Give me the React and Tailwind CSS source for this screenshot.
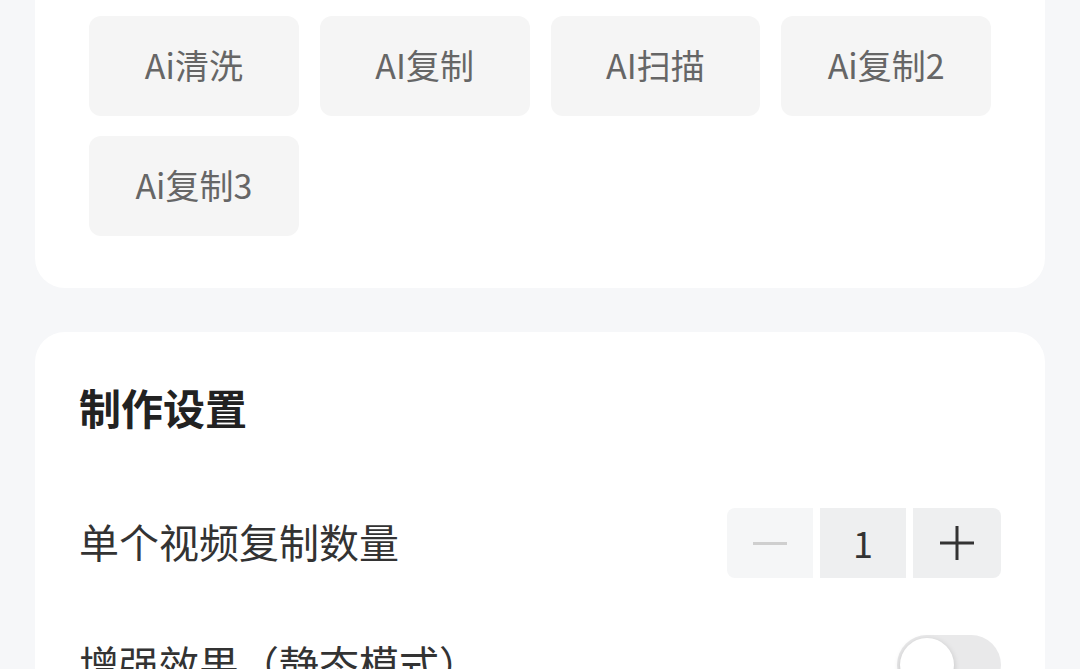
import React, { useState } from 'react';

const tools = ['Ai清洗', 'AI复制', 'AI扫描', 'Ai复制2', 'Ai复制3'];

const App = () => {
  const [count, setCount] = useState(1);
  const [enhance, setEnhance] = useState(false);

  return (
    <div
      className="min-h-screen bg-[#f6f7f9] px-[35px] overflow-hidden"
      style={{ fontFamily: '"Noto Sans CJK SC", "Noto Sans", sans-serif' }}
    >
      {/* Tool card */}
      <div className="-mt-[60px] bg-white rounded-[30px] pt-[76px] pb-[52px] px-[54px]">
        <div className="grid grid-cols-4 gap-x-[21px] gap-y-[20px]">
          {tools.map((t) => (
            <button
              key={t}
              className="h-[100px] pb-[4px] rounded-[12px] bg-[#f5f5f5] text-[34px] text-[#666666] flex items-center justify-center"
            >
              {t}
            </button>
          ))}
        </div>
      </div>

      {/* Settings card */}
      <div className="mt-[44px] bg-white rounded-[30px] pt-[47px] px-[44px] pb-[40px]">
        <h2 className="text-[42px] leading-[56px] font-bold text-[#222222]">制作设置</h2>

        <div className="mt-[47px] h-[122px] flex items-center justify-between">
          <span className="text-[40px] leading-[56px] pb-[4px] text-[#333333]">单个视频复制数量</span>
          <div className="flex gap-[7px]">
            <button
              onClick={() => setCount(Math.max(1, count - 1))}
              className="w-[86px] h-[70px] rounded-l-[8px] bg-[#f5f6f7] flex items-center justify-center"
            >
              <span className="block w-[34px] h-[3px] bg-[#cfcfcf]"></span>
            </button>
            <div className="w-[86px] h-[70px] pb-[2px] bg-[#eeeff0] flex items-center justify-center text-[36px] text-[#333333]">
              {count}
            </div>
            <button
              onClick={() => setCount(count + 1)}
              className="w-[88px] h-[70px] rounded-r-[8px] bg-[#eeeff0] flex items-center justify-center"
            >
              <svg width="36" height="36" viewBox="0 0 36 36">
                <path d="M1 18h34M18 1v34" stroke="#333" strokeWidth="3" />
              </svg>
            </button>
          </div>
        </div>

        <div className="h-[122px] flex items-center justify-between">
          <span className="text-[40px] leading-[56px] pb-[4px] text-[#333333]">增强效果（静态模式）</span>
          <button
            onClick={() => setEnhance(!enhance)}
            className={`w-[104px] h-[60px] rounded-full p-[3px] flex ${enhance ? 'bg-[#3b82f6] justify-end' : 'bg-[#e9e9ea] justify-start'}`}
          >
            <span className="w-[54px] h-[54px] rounded-full bg-white shadow-[0_2px_6px_rgba(0,0,0,0.18)]"></span>
          </button>
        </div>
      </div>
    </div>
  );
};

export default App;
